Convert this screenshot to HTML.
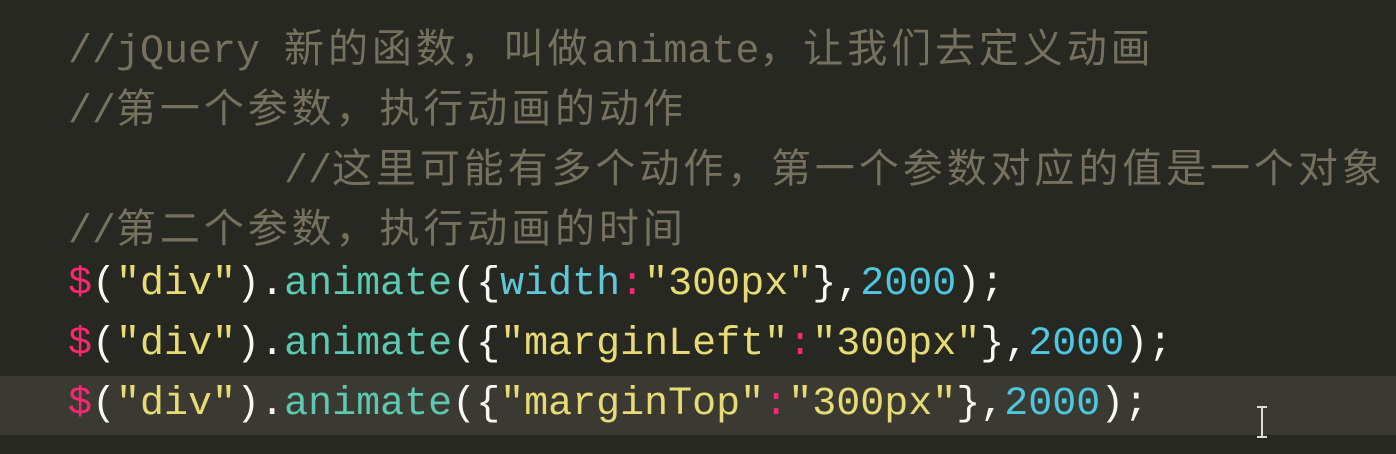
<!DOCTYPE html>
<html><head><meta charset="utf-8"><style>
html,body{margin:0;padding:0}
body{width:1396px;height:454px;background:#272822;overflow:hidden;position:relative;font-family:"Liberation Mono","Noto Sans CJK SC",monospace;font-size:40px;}
.hl{position:absolute;left:0;top:376px;width:1396px;height:59px;background:#3b3a32}
.l{position:absolute;left:68px;height:60px;line-height:60px;white-space:pre;color:#f8f8f2}
.c{color:#75715e}
.z{font-family:"Noto Sans CJK SC",sans-serif;letter-spacing:3.9px;font-size:40px}
.s{color:#e6db74}.d{color:#f92672}.f{color:#5cc9b0}.n{color:#4ec8e0}.k{color:#5ec8d8}
.cur{position:absolute;left:1261px;top:406px;width:2px;height:32px;background:#ddd}
.cur:before,.cur:after{content:"";position:absolute;left:-4px;width:10px;height:2px;background:#ddd}
.cur:before{top:0}.cur:after{bottom:0}
</style></head><body>
<div class="hl"></div>
<div class="l c" style="top:15px">//jQuery <span class="z">新的函数，叫做</span>animate<span class="z">，让我们去定义动画</span></div>
<div class="l c" style="top:75px">//<span class="z">第一个参数，执行动画的动作</span></div>
<div class="l c" style="top:135px;left:284px">//<span class="z">这里可能有多个动作，第一个参数对应的值是一个对象</span></div>
<div class="l c" style="top:195px">//<span class="z">第二个参数，执行动画的时间</span></div>
<div class="l" style="top:255px"><span class="d">$</span>(<span class="s">"div"</span>).<span class="f">animate</span>({<span class="k">width</span><span class="d">:</span><span class="s">"300px"</span>},<span class="n">2000</span>);</div>
<div class="l" style="top:315px"><span class="d">$</span>(<span class="s">"div"</span>).<span class="f">animate</span>({<span class="s">"marginLeft"</span><span class="d">:</span><span class="s">"300px"</span>},<span class="n">2000</span>);</div>
<div class="l" style="top:375px"><span class="d">$</span>(<span class="s">"div"</span>).<span class="f">animate</span>({<span class="s">"marginTop"</span><span class="d">:</span><span class="s">"300px"</span>},<span class="n">2000</span>);</div>
<div class="cur"></div>
</body></html>
